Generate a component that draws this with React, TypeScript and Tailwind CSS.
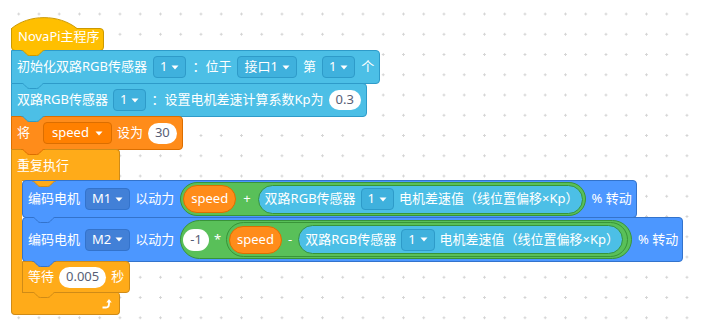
import type { ReactNode } from "react";

const FONT = "font-['Noto_Sans','Noto_Sans_CJK_SC',sans-serif]";

function Tri() {
  return (
    <svg width="8" height="5" viewBox="0 0 8 5">
      <path d="M0.5 0.5 H7.5 L4 4.5 Z" fill="white" />
    </svg>
  );
}

function Dd({ label, cls }: { label: string; cls: string }) {
  return (
    <div className={`flex h-[22px] items-center rounded-[4px] border ${cls}`}>
      <span>{label}</span>
      <Tri />
    </div>
  );
}

function Num({ v, cls = "h-[20px]" }: { v: string; cls?: string }) {
  return (
    <div className={`flex items-center rounded-full bg-white px-[7px] text-[#575e75] ${cls}`}>{v}</div>
  );
}

// bottom tab of a stack block, drawn over the block below
function Tab({ fill, stroke, left = "left-[9px]" }: { fill: string; stroke: string; left?: string }) {
  const d =
    "M0 0 C1.5 0 2.2 0.7 2.9 1.4 L5.6 4.2 C6.3 4.9 7 5.5 8.4 5.5 H15.6 C17 5.5 17.7 4.9 18.4 4.2 L21.1 1.4 C21.8 0.7 22.5 0 24 0";
  return (
    <svg className={`absolute top-full z-10 ${left}`} width="24" height="7" viewBox="0 0 24 7">
      <path d={d + " Z"} fill={fill} />
      <path d={d} fill="none" stroke={stroke} strokeWidth="1" />
    </svg>
  );
}

function Reporter({ children }: { children: ReactNode }) {
  return (
    <div className="flex h-[29px] items-center gap-[5px] rounded-full border border-[#389438] bg-[#4cbfe6] pl-[6px] pr-[3px]">
      {children}
    </div>
  );
}

function Speed() {
  return (
    <div className="flex h-[28px] items-center rounded-full border border-[#db6e00] bg-[#ff8c1a] px-[7px]">speed</div>
  );
}

const sensorDd = "gap-[4px] px-[6px] bg-[#3fb1dd] border-[#2e9bc9]";
const motorDd = "gap-[4px] px-[6px] bg-[#4280d7] border-[#3373cc]";

export default function App() {
  return (
    <div
      className={`h-[324px] w-[704px] overflow-hidden whitespace-nowrap bg-white bg-[radial-gradient(circle,#d4d4d4_1px,transparent_1.3px)] bg-[size:20.25px_20.25px] bg-[position:8.6px_3.9px] text-[13px] text-white ${FONT}`}
    >
      <div className="flex flex-col items-start pl-[11px] pt-[28px]">
        {/* hat */}
        <div className="relative flex h-[23px] w-[93px] items-center rounded-b-[4px] rounded-tr-[4px] border border-[#cc9900] bg-[#ffbf00] pb-[6px] pl-[6px]">
          <svg className="absolute -left-px -top-[12px]" width="68" height="13" viewBox="0 0 68 13">
            <path d="M0.5 13 V11.5 C18 -3 48 -3 66 11.5 V13 Z" fill="#ffbf00" />
            <path d="M0.5 13 V11.5 C18 -3 48 -3 66 11.5" fill="none" stroke="#cc9900" />
          </svg>
          <span className="relative">NovaPi主程序</span>
          <Tab fill="#ffbf00" stroke="#cc9900" />
        </div>

        {/* init sensor */}
        <div className="relative -mt-px flex h-[34px] items-center gap-[6px] rounded-r-[4px] border border-[#2e9bc9] bg-[#4cbfe6] px-[5px]">
          <span>初始化双路RGB传感器</span>
          <Dd label="1" cls={sensorDd} />
          <span>：位于</span>
          <Dd label="接口1" cls={sensorDd} />
          <span>第</span>
          <Dd label="1" cls={sensorDd} />
          <span>个</span>
          <Tab fill="#4cbfe6" stroke="#2e9bc9" />
        </div>

        {/* set kp */}
        <div className="relative -mt-px flex h-[34px] items-center gap-[5px] rounded-r-[4px] border border-[#2e9bc9] bg-[#4cbfe6] px-[5px]">
          <span>双路RGB传感器</span>
          <Dd label="1" cls={sensorDd} />
          <span>：设置电机差速计算系数Kp为</span>
          <Num v="0.3" />
          <Tab fill="#4cbfe6" stroke="#2e9bc9" />
        </div>

        {/* set variable */}
        <div className="relative -mt-px flex h-[34px] items-center gap-[5px] rounded-r-[4px] border border-[#db6e00] bg-[#ff8c1a] px-[5px]">
          <span className="mr-[8px]">将</span>
          <Dd label="speed" cls="gap-[6px] px-[8px] bg-[#ff8000] border-[#db6e00]" />
          <span>设为</span>
          <Num v="30" cls="h-[21px]" />
          <Tab fill="#ff8c1a" stroke="#db6e00" />
        </div>

        {/* repeat */}
        <div className="-mt-px flex flex-col items-start">
          <div className="relative flex h-[32px] w-[109px] items-center rounded-tr-[4px] border border-b-0 border-[#cf8b17] bg-[#ffab19] px-[5px]">
            <span>重复执行</span>
            <div className="absolute bottom-0 left-[10px] right-[-1px] h-px bg-[#cf8b17]" />
            <Tab fill="#ffab19" stroke="#cf8b17" left="left-[20px]" />
          </div>
          <div className="flex">
            <div className="w-[11px] border-l border-[#cf8b17] bg-[#ffab19]" />
            <div className="-mt-px flex flex-col items-start">
              <div className="relative flex h-[38px] items-center gap-[5px] rounded-[4px] border border-[#3373cc] bg-[#4c97ff] pl-[5px] pr-[4px]">
                <span>编码电机</span>
                <Dd label="M1" cls={motorDd} />
                <span className="mr-[1px]">以动力</span>
                <div className="flex h-[34px] items-center gap-[7px] rounded-full border border-[#389438] bg-[#59c059] px-[2px]">
                  <Speed />
                  <span>+</span>
                  <Reporter>
                    <span>双路RGB传感器</span>
                    <Dd label="1" cls={sensorDd} />
                    <span>电机差速值（线位置偏移×Kp）</span>
                  </Reporter>
                </div>
                <span className="ml-[1px]">% 转动</span>
                <Tab fill="#4c97ff" stroke="#3373cc" />
              </div>

              <div className="relative -mt-px flex h-[45px] items-center gap-[5px] rounded-[4px] border border-[#3373cc] bg-[#4c97ff] pl-[5px] pr-[4px]">
                <span>编码电机</span>
                <Dd label="M2" cls={motorDd} />
                <span className="mr-[1px]">以动力</span>
                <div className="flex h-[39px] items-center gap-[5px] rounded-full border border-[#389438] bg-[#59c059] pl-[2px] pr-[3px]">
                  <Num v="-1" cls="h-[22px]" />
                  <span>*</span>
                  <div className="flex h-[35px] items-center gap-[6px] rounded-full border border-[#389438] bg-[#59c059] pl-[2px] pr-[4px]">
                    <Speed />
                    <span>-</span>
                    <Reporter>
                      <span>双路RGB传感器</span>
                      <Dd label="1" cls={sensorDd} />
                      <span>电机差速值（线位置偏移×Kp）</span>
                    </Reporter>
                  </div>
                </div>
                <span className="ml-[1px]">% 转动</span>
                <Tab fill="#4c97ff" stroke="#3373cc" />
              </div>

              <div className="relative -mt-px flex h-[32px] items-center gap-[5px] rounded-r-[4px] border border-[#cf8b17] bg-[#ffab19] pl-[5px] pr-[5px]">
                <span>等待</span>
                <Num v="0.005" cls="h-[21px]" />
                <span>秒</span>
                <Tab fill="#ffab19" stroke="#cf8b17" />
              </div>
            </div>
          </div>
          <div className="relative -mt-px flex h-[23px] w-[109px] items-center justify-end rounded-b-[4px] rounded-tr-[4px] border border-t-0 border-[#cf8b17] bg-[#ffab19] pr-[7px]">
            <div className="absolute left-[10px] right-[-1px] top-0 h-px bg-[#cf8b17]" />
            <svg width="10" height="11" viewBox="0 0 10 11">
              <path d="M0.5 9.5 H4 Q7 9.5 7 5.5 V4" fill="none" stroke="white" strokeWidth="1.8" />
              <path d="M4.3 4.6 L7 1 L9.7 4.6 Z" fill="white" />
            </svg>
          </div>
        </div>
      </div>
    </div>
  );
}
